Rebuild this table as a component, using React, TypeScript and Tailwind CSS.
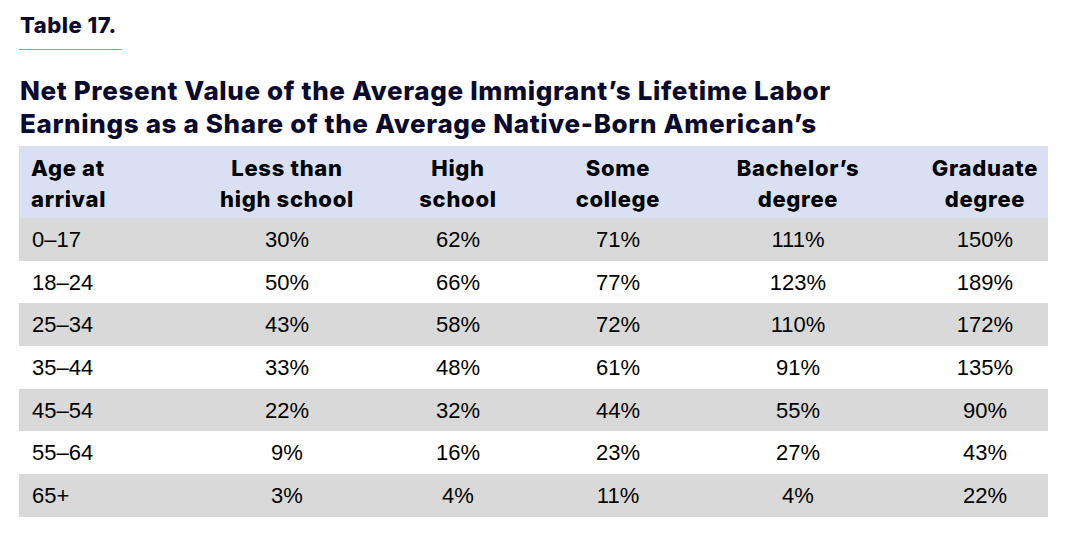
const headers = ['Age at\narrival', 'Less than\nhigh school', 'High\nschool', 'Some\ncollege', 'Bachelor’s\ndegree', 'Graduate\ndegree']

const rows = [
  ['0–17', '30%', '62%', '71%', '111%', '150%'],
  ['18–24', '50%', '66%', '77%', '123%', '189%'],
  ['25–34', '43%', '58%', '72%', '110%', '172%'],
  ['35–44', '33%', '48%', '61%', '91%', '135%'],
  ['45–54', '22%', '32%', '44%', '55%', '90%'],
  ['55–64', '9%', '16%', '23%', '27%', '43%'],
  ['65+', '3%', '4%', '11%', '4%', '22%'],
]

const grid = 'grid grid-cols-[201px_134px_208px_112px_248px_126px]'

export default function App() {
  return (
    <div className="w-[1084px] h-[533px] bg-white pl-[19px] pt-[11px] text-[#0b0a2e]">
      <div className="font-['Inter',sans-serif] font-extrabold text-[22px] leading-[28px] tracking-[0.5px] pl-[1px]">Table 17.</div>
      <div className="mt-[10px] h-px w-[103px] bg-[#f39200]" />
      <h1 className="mt-[24px] font-['Inter',sans-serif] font-extrabold text-[26px] leading-[33px] tracking-[0.65px] pl-[1px]">
        Net Present Value of the Average Immigrant’s Lifetime Labor
        <br />
        Earnings as a Share of the Average Native-Born American’s
      </h1>
      <div className="mt-[6px] w-[1029px]">
        <div className={`${grid} bg-[#dae0f1] h-[72px] pt-[3px] items-center font-['Inter',sans-serif] font-extrabold text-[22px] leading-[31px] tracking-[0.7px] text-black`}>
          {headers.map((h, i) => (
            <div key={i} className={`whitespace-pre ${i === 0 ? 'pl-[12px] text-left' : 'text-center'}`}>
              {h}
            </div>
          ))}
        </div>
        {rows.map((r, ri) => (
          <div
            key={ri}
            className={`${grid} h-[42.7px] items-center font-['Liberation_Sans',sans-serif] text-[22px] text-black ${ri % 2 === 0 ? 'bg-[#d9d9d9]' : 'bg-white'}`}
          >
            {r.map((c, ci) => (
              <div key={ci} className={ci === 0 ? 'pl-[13px]' : 'text-center'}>
                {c}
              </div>
            ))}
          </div>
        ))}
      </div>
    </div>
  )
}
